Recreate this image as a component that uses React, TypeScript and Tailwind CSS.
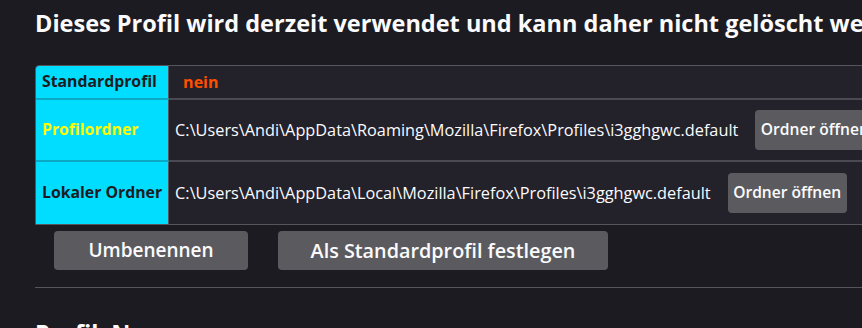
const paths = [
  {
    label: 'Profilordner',
    labelClass: 'text-[#ffff00]',
    path: 'C:\\Users\\Andi\\AppData\\Roaming\\Mozilla\\Firefox\\Profiles\\i3gghgwc.default',
  },
  {
    label: 'Lokaler Ordner',
    labelClass: 'text-[#1c1b22]',
    path: 'C:\\Users\\Andi\\AppData\\Local\\Mozilla\\Firefox\\Profiles\\i3gghgwc.default',
  },
];

function ActionButton({ children, className = '' }: { children: React.ReactNode; className?: string }) {
  return (
    <button
      className={`rounded-[4px] bg-[#5b5b5f] font-semibold text-[#fbfbfe] ${className}`}
    >
      {children}
    </button>
  );
}

export default function App() {
  return (
    <div
      className="h-[328px] w-[862px] overflow-hidden bg-[#1c1b22] text-[#fbfbfe]"
      style={{ fontFamily: '"Open Sans", "Noto Sans", sans-serif' }}
    >
      <div className="w-[1100px] pl-[35px] pt-[8px]">
        <h2 className="whitespace-nowrap text-[23.5px] font-bold leading-[30px]">
          Dieses Profil wird derzeit verwendet und kann daher nicht gelöscht werden.
        </h2>

        <table className="mt-[27px] border-separate border-spacing-0 overflow-hidden rounded-tl-[4px] border border-[#55555c] text-[16.3px]">
          <tbody>
            <tr className="h-[34px]">
              <th className="w-[133px] whitespace-nowrap border-b-2 border-r border-b-[#0aa8c2] border-r-[#55555c] bg-[#00ddff] px-[6px] text-left text-[15.8px] font-bold text-[#1c1b22]">
                Standardprofil
              </th>
              <td className="border-b-2 border-b-[#4a4a52] bg-[#23222b] pl-[14px] text-[16px] font-bold text-[#ff4f00]">
                nein
              </td>
            </tr>
            {paths.map((row, i) => (
              <tr key={row.label} className="h-[62px]">
                <th
                  className={`whitespace-nowrap border-r border-r-[#55555c] bg-[#00ddff] px-[6px] text-left text-[15.8px] font-bold ${row.labelClass} ${i === 0 ? 'border-b-2 border-b-[#0aa8c2]' : ''}`}
                >
                  {row.label}
                </th>
                <td className={`bg-[#23222b] px-[6px] ${i === 0 ? 'border-b-2 border-b-[#4a4a52]' : ''}`}>
                  <div className="flex items-center gap-[17px] whitespace-nowrap">
                    <span>{row.path}</span>
                    <ActionButton className="h-[40px] w-[119px] text-[15.6px]">Ordner öffnen</ActionButton>
                  </div>
                </td>
              </tr>
            ))}
          </tbody>
        </table>

        <div className="flex gap-[30px] pl-[19px] pt-[6px]">
          <ActionButton className="h-[39px] w-[194px] text-[19px]">Umbenennen</ActionButton>
          <ActionButton className="h-[39px] w-[330px] text-[19.8px]">Als Standardprofil festlegen</ActionButton>
        </div>

        <hr className="mt-[17px] border-t border-[#55555c]" />

        <h2 className="mt-[30px] text-[23.5px] font-bold leading-[30px]">Profil: Neu</h2>
      </div>
    </div>
  );
}
